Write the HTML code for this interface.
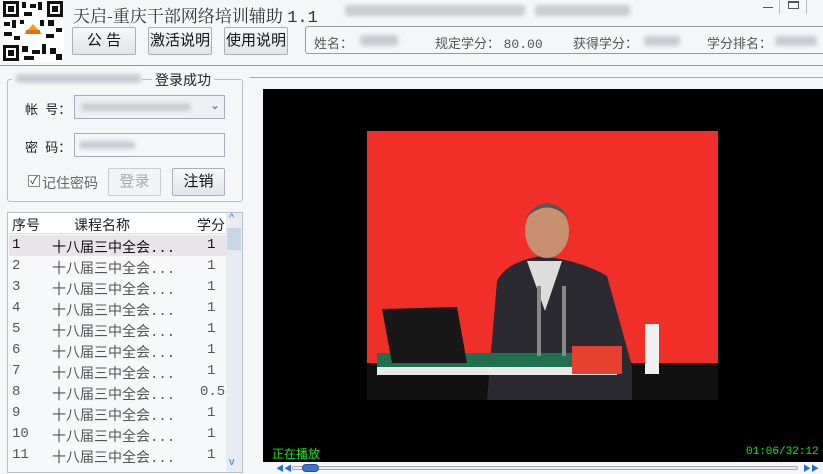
<!DOCTYPE html>
<html><head><meta charset="utf-8"><style>
*{margin:0;padding:0;box-sizing:border-box}
body{width:823px;height:473px;overflow:hidden;background:#f4f6f8;font-family:"Liberation Sans","Noto Sans CJK SC",sans-serif;position:relative;color:#222}
.a{position:absolute}
.btn{position:absolute;border:1px solid #a8b0b8;border-radius:2px;background:linear-gradient(#f6f8fa,#dfe5ea);font-size:15px;text-align:center;line-height:26px;color:#111}
.blur{position:absolute;background:#c8ccd2;filter:blur(2px);border-radius:3px}
.row{position:absolute;left:12px;width:226px;height:21px;font-size:14px;color:#555;font-family:"Liberation Mono","Noto Sans CJK SC",monospace}
.row span{position:absolute;top:2px}
</style></head><body>
<!-- QR -->
<svg class="a" style="left:2px;top:0" width="62" height="62" viewBox="0 0 62 62">
<rect width="62" height="62" fill="#fff"/>
<g fill="#111">
<rect x="1" y="1" width="16" height="16"/><rect x="45" y="1" width="16" height="16"/><rect x="1" y="45" width="16" height="16"/>
</g>
<g fill="#fff"><rect x="4" y="4" width="10" height="10"/><rect x="48" y="4" width="10" height="10"/><rect x="4" y="48" width="10" height="10"/></g>
<g fill="#111"><rect x="6" y="6" width="6" height="6"/><rect x="50" y="6" width="6" height="6"/><rect x="6" y="50" width="6" height="6"/>
<rect x="20" y="2" width="4" height="6"/><rect x="28" y="4" width="6" height="4"/><rect x="36" y="2" width="4" height="8"/><rect x="22" y="12" width="8" height="4"/><rect x="2" y="22" width="6" height="4"/><rect x="10" y="20" width="4" height="8"/><rect x="2" y="32" width="8" height="4"/><rect x="12" y="36" width="6" height="4"/><rect x="46" y="20" width="6" height="6"/><rect x="54" y="28" width="6" height="4"/><rect x="44" y="34" width="8" height="4"/><rect x="20" y="46" width="6" height="6"/><rect x="30" y="50" width="8" height="4"/><rect x="40" y="44" width="4" height="10"/><rect x="48" y="48" width="6" height="6"/><rect x="54" y="54" width="6" height="6"/><rect x="22" y="56" width="10" height="4"/><rect x="38" y="20" width="4" height="6"/><rect x="18" y="20" width="4" height="4"/></g>
<path d="M22 34 L31 24 L40 34 Z" fill="#f0a020"/><rect x="24" y="30" width="14" height="4" fill="#e07010"/>
</svg>
<div class="a" style="left:73px;top:2px;font-size:17px;color:#333;font-family:'Noto Serif CJK SC','Liberation Serif',serif">天启-重庆干部网络培训辅助 <span style="font-family:'Liberation Mono',monospace">1.1</span></div>
<div class="blur" style="left:345px;top:5px;width:180px;height:11px"></div>
<div class="blur" style="left:535px;top:5px;width:95px;height:11px"></div>
<div class="a" style="left:763px;top:7px;width:10px;height:1px;background:#555"></div>
<div class="a" style="left:779px;top:0;width:1px;height:14px;background:#bbb"></div>
<div class="a" style="left:788px;top:1px;width:11px;height:8px;border:1px solid #555;border-top-width:2px"></div>
<div class="a" style="left:806px;top:0;width:1px;height:14px;background:#bbb"></div>
<div class="btn" style="left:72px;top:27px;width:64px">公 告</div>
<div class="btn" style="left:148px;top:27px;width:64px">激活说明</div>
<div class="btn" style="left:224px;top:27px;width:64px">使用说明</div>
<div class="a" style="left:305px;top:26px;width:523px;height:28px;border:1px solid #999;border-right:none;border-radius:3px 0 0 3px"></div>
<div class="a" style="left:314px;top:33px;font-size:13px;color:#555;white-space:nowrap">姓名：</div>
<div class="blur" style="left:360px;top:35px;width:38px;height:11px"></div>
<div class="a" style="left:435px;top:33px;font-size:13px;color:#555;white-space:nowrap">规定学分： <span style="font-family:'Liberation Mono',monospace">80.00</span></div>
<div class="a" style="left:573px;top:33px;font-size:13px;color:#555">获得学分：</div>
<div class="blur" style="left:644px;top:36px;width:36px;height:10px"></div>
<div class="a" style="left:707px;top:33px;font-size:13px;color:#555">学分排名：</div>
<div class="blur" style="left:775px;top:36px;width:42px;height:10px"></div>
<div class="a" style="left:0;top:65px;width:823px;height:1px;background:#999"></div>
<!-- login group -->
<div class="a" style="left:7px;top:79px;width:236px;height:123px;border:1px solid #b8bec4;border-radius:3px"></div>
<div class="a" style="left:12px;top:71px;width:130px;height:14px;background:#f4f6f8"></div>
<div class="blur" style="left:16px;top:74px;width:125px;height:9px"></div>
<div class="a" style="left:152px;top:70px;font-size:14px;background:#f4f6f8;padding:0 3px">登录成功</div>
<div class="a" style="left:25px;top:99px;font-size:13px">帐 &nbsp;号：</div>
<div class="a" style="left:74px;top:95px;width:151px;height:24px;border:1px solid #aab;background:#eef1f4"><div class="blur" style="left:6px;top:7px;width:110px;height:8px"></div><span style="position:absolute;right:4px;top:2px;color:#2a6bd0;font-size:12px">⌄</span></div>
<div class="a" style="left:25px;top:137px;font-size:13px">密 &nbsp;码：</div>
<div class="a" style="left:74px;top:133px;width:151px;height:24px;border:1px solid #aab;background:#f6f7f8"><div class="blur" style="left:4px;top:7px;width:56px;height:8px"></div></div>
<div class="a" style="left:28px;top:175px;width:12px;height:12px;border:1px solid #888;background:#fff;font-size:11px;line-height:10px;text-align:center;color:#333">✓</div>
<div class="a" style="left:42px;top:173px;font-size:14px;color:#666">记住密码</div>
<div class="btn" style="left:108px;top:168px;width:53px;color:#aaa;background:#f2f3f4;border-color:#ccc">登录</div>
<div class="btn" style="left:172px;top:168px;width:53px">注销</div>
<!-- list -->
<div class="a" style="left:7px;top:212px;width:236px;height:261px;border:1px solid #b8bec4;background:#f7f8fa"></div>
<div class="a" style="left:8px;top:213px;width:218px;height:21px;background:#fff;border-bottom:1px solid #dde"></div>
<div class="a" style="left:12px;top:215px;font-size:14px">序号</div>
<div class="a" style="left:74px;top:215px;font-size:14px">课程名称</div>
<div class="a" style="left:197px;top:215px;font-size:14px">学分</div>
<div class="a" style="left:226px;top:213px;width:16px;height:259px;background:#e6ecf2"></div>
<div class="a" style="left:227px;top:228px;width:14px;height:22px;background:#c8d6e6"></div>
<div class="a" style="left:229px;top:212px;color:#3a78c8;font-size:11px">^</div>
<div class="a" style="left:229px;top:456px;color:#3a78c8;font-size:11px">v</div>
<div class="a" style="left:9px;top:235px;width:217px;height:21px;background:#e8e4ea"></div>
<div class="row" style="top:235px;color:#111"><span style="left:0">1</span><span style="left:40px">十八届三中全会...</span><span style="left:195px">1</span></div>
<div class="row" style="top:256px"><span style="left:0">2</span><span style="left:40px">十八届三中全会...</span><span style="left:195px">1</span></div>
<div class="row" style="top:277px"><span style="left:0">3</span><span style="left:40px">十八届三中全会...</span><span style="left:195px">1</span></div>
<div class="row" style="top:298px"><span style="left:0">4</span><span style="left:40px">十八届三中全会...</span><span style="left:195px">1</span></div>
<div class="row" style="top:319px"><span style="left:0">5</span><span style="left:40px">十八届三中全会...</span><span style="left:195px">1</span></div>
<div class="row" style="top:340px"><span style="left:0">6</span><span style="left:40px">十八届三中全会...</span><span style="left:195px">1</span></div>
<div class="row" style="top:361px"><span style="left:0">7</span><span style="left:40px">十八届三中全会...</span><span style="left:195px">1</span></div>
<div class="row" style="top:382px"><span style="left:0">8</span><span style="left:40px">十八届三中全会...</span><span style="left:188px">0.5</span></div>
<div class="row" style="top:403px"><span style="left:0">9</span><span style="left:40px">十八届三中全会...</span><span style="left:195px">1</span></div>
<div class="row" style="top:424px"><span style="left:0">10</span><span style="left:40px">十八届三中全会...</span><span style="left:195px">1</span></div>
<div class="row" style="top:445px"><span style="left:0">11</span><span style="left:40px">十八届三中全会...</span><span style="left:195px">1</span></div>
<!-- video -->
<div class="a" style="left:250px;top:77px;width:573px;height:1px;background:#aaa"></div>
<div class="a" style="left:263px;top:89px;width:560px;height:373px;background:#000"></div>
<svg class="a" style="left:367px;top:131px" width="351" height="269" viewBox="0 0 351 269">
<rect width="351" height="269" fill="#f03028"/>
<rect x="0" y="232" width="351" height="37" fill="#111"/>
<path d="M120 269 L130 150 Q140 130 175 125 Q215 130 240 145 L265 235 L265 269 Z" fill="#2a2a30"/>
<path d="M160 130 L178 180 L195 130 Z" fill="#ddd"/>
<ellipse cx="180" cy="100" rx="22" ry="27" fill="#c89070"/>
<path d="M158 88 Q180 65 202 88 Q195 74 180 72 Q165 74 158 88Z" fill="#555"/>
<rect x="10" y="222" width="230" height="20" fill="#207050"/>
<rect x="10" y="236" width="240" height="8" fill="#e8e8e8"/>
<path d="M15 178 L90 176 L100 232 L25 232 Z" fill="#181818"/>
<rect x="205" y="215" width="50" height="28" fill="#e84030"/>
<rect x="278" y="193" width="14" height="50" fill="#f0f0f0"/>
<rect x="170" y="155" width="4" height="70" fill="#888"/>
<rect x="195" y="155" width="4" height="70" fill="#888"/>
</svg>
<div class="a" style="left:272px;top:445px;color:#19e619;font-size:12px">正在播放</div>
<div class="a" style="left:746px;top:446px;color:#19e619;font-size:11px;font-family:'Liberation Mono',monospace">01:06/32:12</div>
<div class="a" style="left:263px;top:462px;width:560px;height:11px;background:#f4f6f8"></div>
<div class="a" style="left:276px;top:463px;color:#2a6bd0;font-size:8px">◀◀</div>
<div class="a" style="left:292px;top:466px;width:506px;height:4px;border:1px solid #aaa;border-radius:2px;background:#eee"></div>
<div class="a" style="left:302px;top:464px;width:17px;height:8px;border-radius:4px;background:#4070d0;border:1px solid #2050a0"></div>
<div class="a" style="left:803px;top:463px;color:#2a6bd0;font-size:8px">▶▶</div>
</body></html>
